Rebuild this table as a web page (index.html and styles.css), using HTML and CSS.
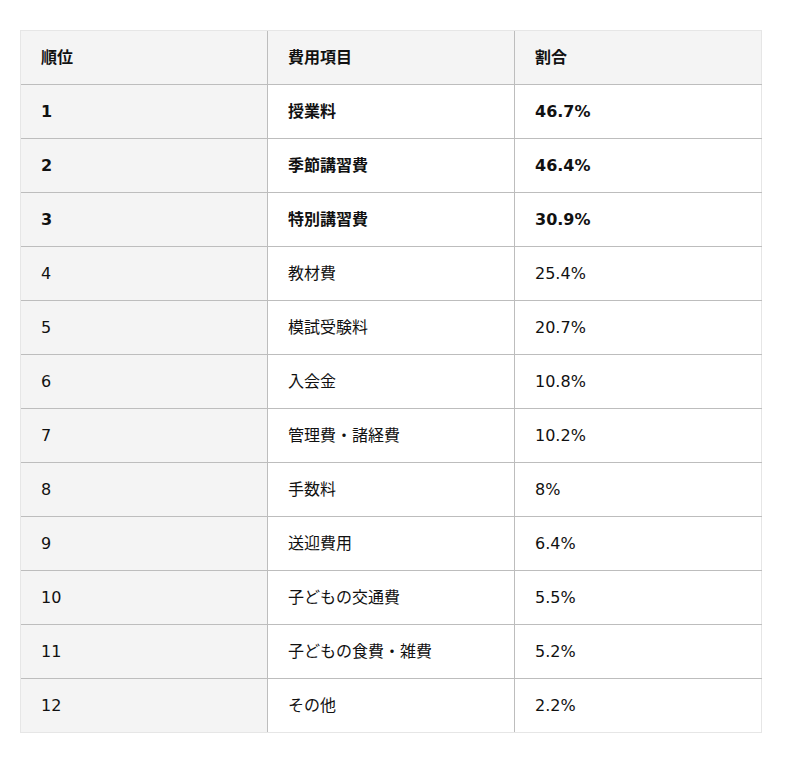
FILE: index.html
```html
<!DOCTYPE html>
<html lang="ja">
<head>
<meta charset="utf-8">
<link rel="stylesheet" href="styles.css">
</head>
<body>
<table class="rank">
  <thead>
    <tr><th>順位</th><th>費用項目</th><th>割合</th></tr>
  </thead>
  <tbody>
    <tr class="top"><td>1</td><td>授業料</td><td>46.7%</td></tr>
    <tr class="top"><td>2</td><td>季節講習費</td><td>46.4%</td></tr>
    <tr class="top"><td>3</td><td>特別講習費</td><td>30.9%</td></tr>
    <tr><td>4</td><td>教材費</td><td>25.4%</td></tr>
    <tr><td>5</td><td>模試受験料</td><td>20.7%</td></tr>
    <tr><td>6</td><td>入会金</td><td>10.8%</td></tr>
    <tr><td>7</td><td>管理費・諸経費</td><td>10.2%</td></tr>
    <tr><td>8</td><td>手数料</td><td>8%</td></tr>
    <tr><td>9</td><td>送迎費用</td><td>6.4%</td></tr>
    <tr><td>10</td><td>子どもの交通費</td><td>5.5%</td></tr>
    <tr><td>11</td><td>子どもの食費・雑費</td><td>5.2%</td></tr>
    <tr><td>12</td><td>その他</td><td>2.2%</td></tr>
  </tbody>
</table>
</body>
</html>
```
FILE: styles.css
```css
body {
  margin: 0;
  padding: 30px 20px;
  background: #fff;
  font-family: "DejaVu Sans", "Noto Sans CJK JP", sans-serif;
  color: #111;
}
.rank {
  width: 742px;
  border-collapse: collapse;
  table-layout: fixed;
  border: 1px solid #e6e6e6;
  font-size: 16px;
  line-height: 24px;
}
.rank th,
.rank td {
  height: 53px;
  padding: 0 20px;
  text-align: left;
  vertical-align: middle;
  border-top: 1px solid #bdbdbd;
  border-left: 1px solid #bdbdbd;
}
.rank th {
  background: #f4f4f4;
  font-weight: bold;
  border-top: 1px solid #e6e6e6;
}
.rank th:first-child,
.rank td:first-child {
  border-left: 1px solid #e6e6e6;
}
.rank td:first-child {
  background: #f4f4f4;
}
.rank tr:last-child td {
  border-bottom: 1px solid #e6e6e6;
}
.rank .top td {
  font-weight: bold;
}
```
